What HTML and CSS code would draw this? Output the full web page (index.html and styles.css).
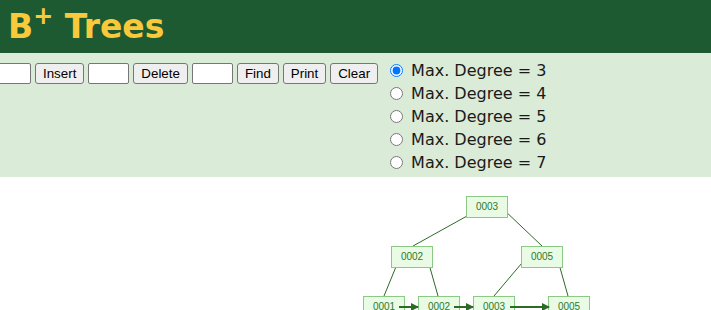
FILE: index.html
```html
<!DOCTYPE html>
<html lang="en">

<head>
  <meta charset="utf-8">
  <title>B+ Trees</title>
  <link rel="stylesheet" href="styles.css">
</head>

<body>
  <div class="header">
    <h1>B<sup>+</sup> Trees</h1>
  </div>

  <div class="controls">
    <div class="buttons">
      <input type="text" class="field">
      <button type="button">Insert</button>
      <input type="text" class="field">
      <button type="button">Delete</button>
      <input type="text" class="field">
      <button type="button">Find</button>
      <button type="button">Print</button>
      <button type="button">Clear</button>
    </div>
    <div class="degrees">
      <label><input type="radio" name="degree" checked> Max. Degree = 3</label>
      <label><input type="radio" name="degree"> Max. Degree = 4</label>
      <label><input type="radio" name="degree"> Max. Degree = 5</label>
      <label><input type="radio" name="degree"> Max. Degree = 6</label>
      <label><input type="radio" name="degree"> Max. Degree = 7</label>
    </div>
  </div>

  <div class="canvas">
    <svg class="tree" width="711" height="133" viewBox="0 177 711 133">
      <defs>
        <marker id="arrow" markerWidth="8" markerHeight="8" refX="7" refY="4" orient="auto" markerUnits="userSpaceOnUse">
          <path d="M0,0 L8,4 L0,8 z" fill="#2c6b26"/>
        </marker>
      </defs>

      <g class="edges">
        <line x1="467" y1="216" x2="413" y2="246"/>
        <line x1="502" y1="208" x2="542" y2="246"/>
        <line x1="400" y1="257" x2="384" y2="296"/>
        <line x1="427" y1="257" x2="438" y2="296"/>
        <line x1="527" y1="257" x2="494" y2="296"/>
        <line x1="557" y1="257" x2="568" y2="296"/>
      </g>

      <g class="node"><rect x="466.5" y="196.5" width="41" height="21"/><text x="487" y="210">0003</text></g>
      <g class="node"><rect x="391.5" y="246.5" width="41" height="21"/><text x="412" y="260">0002</text></g>
      <g class="node"><rect x="521.5" y="246.5" width="41" height="21"/><text x="542" y="260">0005</text></g>
      <g class="node"><rect x="363.5" y="296.5" width="41" height="21"/><text x="384" y="310">0001</text></g>
      <g class="node"><rect x="418.5" y="296.5" width="41" height="21"/><text x="439" y="310">0002</text></g>
      <g class="node"><rect x="473.5" y="296.5" width="41" height="21"/><text x="494" y="310">0003</text></g>
      <g class="node"><rect x="548.5" y="296.5" width="41" height="21"/><text x="569" y="310">0005</text></g>

      <g class="edges front">
        <line x1="399" y1="307" x2="418" y2="307" marker-end="url(#arrow)"/>
        <line x1="454" y1="307" x2="473" y2="307" marker-end="url(#arrow)"/>
        <line x1="510" y1="307" x2="549" y2="307" marker-end="url(#arrow)"/>
      </g>
    </svg>
  </div>
</body>

</html>
```

FILE: styles.css
```css
body {
  margin: 0;
  font-family: "DejaVu Sans", Verdana, sans-serif;
  overflow: hidden;
}

.header {
  height: 53px;
  background-color: #1e5a31;
  padding-left: 8px;
}

h1 {
  margin: 0;
  font-size: 33px;
  line-height: 53px;
  font-weight: bold;
  color: #f9c93c;
}

h1 sup {
  font-size: 24px;
  line-height: 0;
  vertical-align: 14px;
}

.controls {
  display: flex;
  height: 124px;
  background-color: #daebd8;
}

.buttons {
  display: flex;
  align-items: flex-start;
  gap: 4px;
  margin-left: -10px;
  padding-top: 10px;
}

.buttons button,
.buttons input {
  font-family: "Liberation Sans", Arial, sans-serif;
  font-size: 13.33px;
  height: 21px;
  margin: 0;
  box-sizing: border-box;
}

.buttons .field {
  width: 41px;
  padding: 1px 2px;
  border: 1px solid #767676;
  border-radius: 2px;
  background: #fff;
}

.buttons button {
  padding: 1px 7px;
  border: 1px solid #767676;
  border-radius: 3px;
  background-color: #efefef;
  color: #000;
}

.degrees {
  display: flex;
  flex-direction: column;
  margin-left: 11px;
  padding-top: 6px;
}

.degrees label {
  display: flex;
  align-items: center;
  height: 23px;
  font-size: 16px;
  color: #1a1a1a;
  gap: 8px;
}

.degrees input {
  margin: 0 0 0 1px;
  width: 13px;
  height: 13px;
}

.canvas {
  background: #fff;
}

.tree {
  display: block;
}

.edges line {
  stroke: #2c6b26;
  stroke-width: 1;
}

.edges.front line {
  stroke-width: 2;
}

.node rect {
  fill: #e9fbe5;
  stroke: #8dc986;
  stroke-width: 1;
}

.node text {
  font-family: "Liberation Sans", Arial, sans-serif;
  font-size: 10px;
  fill: #2c7a2a;
  text-anchor: middle;
}
```
